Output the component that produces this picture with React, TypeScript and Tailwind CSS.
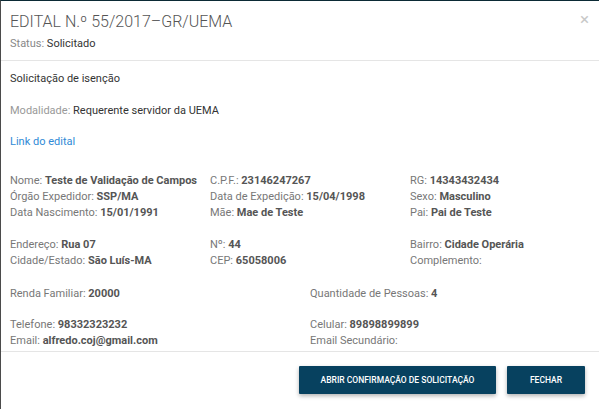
const font = { fontFamily: "Roboto, 'Liberation Sans', sans-serif" }

function Field({ label, value }: { label: string; value?: string }) {
  return (
    <div className="h-4 leading-4 whitespace-nowrap">
      <span className="text-[#777]">{label}:</span>{" "}
      {value && <span className="font-bold text-[#555]">{value}</span>}
    </div>
  )
}

export default function App() {
  return (
    <div className="w-[599px] h-[409px] overflow-hidden bg-white" style={font}>
      <div className="h-full border-t border-t-[#0b2a35] border-l border-l-[#4b4b4b] bg-white">
        <div className="relative px-[9px] pt-[11px] pb-[8px] border-b border-[#e5e5e5]">
          <h4 className="text-[16px] leading-5 font-light text-[#555]">EDITAL N.º 55/2017–GR/UEMA</h4>
          <div className="mt-1 text-[11px] leading-4">
            <span className="text-[#888]">Status:</span> <span className="text-[#333]">Solicitado</span>
          </div>
          <span className="absolute right-[10px] top-[8px] text-[17px] leading-5 text-[#c8c8c8]">×</span>
        </div>

        <div className="px-[9px] text-[11px]">
          <div className="mt-[10px] h-4 leading-4 text-[#333]">Solicitação de isenção</div>
          <div className="mt-4 h-4 leading-4">
            <span className="text-[#999]">Modalidade:</span> <span className="text-[#333]">Requerente servidor da UEMA</span>
          </div>
          <div className="mt-[15px] h-4 leading-4 text-[#2f8ad6]">Link do edital</div>

          <div className="mt-[23px] grid grid-cols-[200px_200px_200px]">
            <Field label="Nome" value="Teste de Validação de Campos" />
            <Field label="C.P.F." value="23146247267" />
            <Field label="RG" value="14343432434" />
            <Field label="Órgão Expedidor" value="SSP/MA" />
            <Field label="Data de Expedição" value="15/04/1998" />
            <Field label="Sexo" value="Masculino" />
            <Field label="Data Nascimento" value="15/01/1991" />
            <Field label="Mãe" value="Mae de Teste" />
            <Field label="Pai" value="Pai de Teste" />
          </div>

          <div className="mt-4 grid grid-cols-[200px_200px_200px]">
            <Field label="Endereço" value="Rua 07" />
            <Field label="Nº" value="44" />
            <Field label="Bairro" value="Cidade Operária" />
            <Field label="Cidade/Estado" value="São Luís-MA" />
            <Field label="CEP" value="65058006" />
            <Field label="Complemento" />
          </div>

          <div className="mt-[17px] grid grid-cols-[300px_300px]">
            <Field label="Renda Familiar" value="20000" />
            <Field label="Quantidade de Pessoas" value="4" />
          </div>

          <div className="mt-[15px] grid grid-cols-[300px_300px]">
            <Field label="Telefone" value="98332323232" />
            <Field label="Celular" value="89898899899" />
            <Field label="Email" value="alfredo.coj@gmail.com" />
            <Field label="Email Secundário" />
          </div>
        </div>

        <div className="mt-[2px] border-t border-[#e5e5e5] flex justify-end gap-[11px] pt-[14px] pr-[14px]">
          <button className="h-7 w-[197px] bg-[#07415f] text-white text-[8.5px] font-medium uppercase shadow-[0_2px_4px_rgba(0,0,0,0.3)] rounded-[1px]">
            Abrir confirmação de solicitação
          </button>
          <button className="h-7 w-[78px] bg-[#07415f] text-white text-[8.5px] font-medium uppercase shadow-[0_2px_4px_rgba(0,0,0,0.3)] rounded-[1px]">
            Fechar
          </button>
        </div>
      </div>
    </div>
  )
}
